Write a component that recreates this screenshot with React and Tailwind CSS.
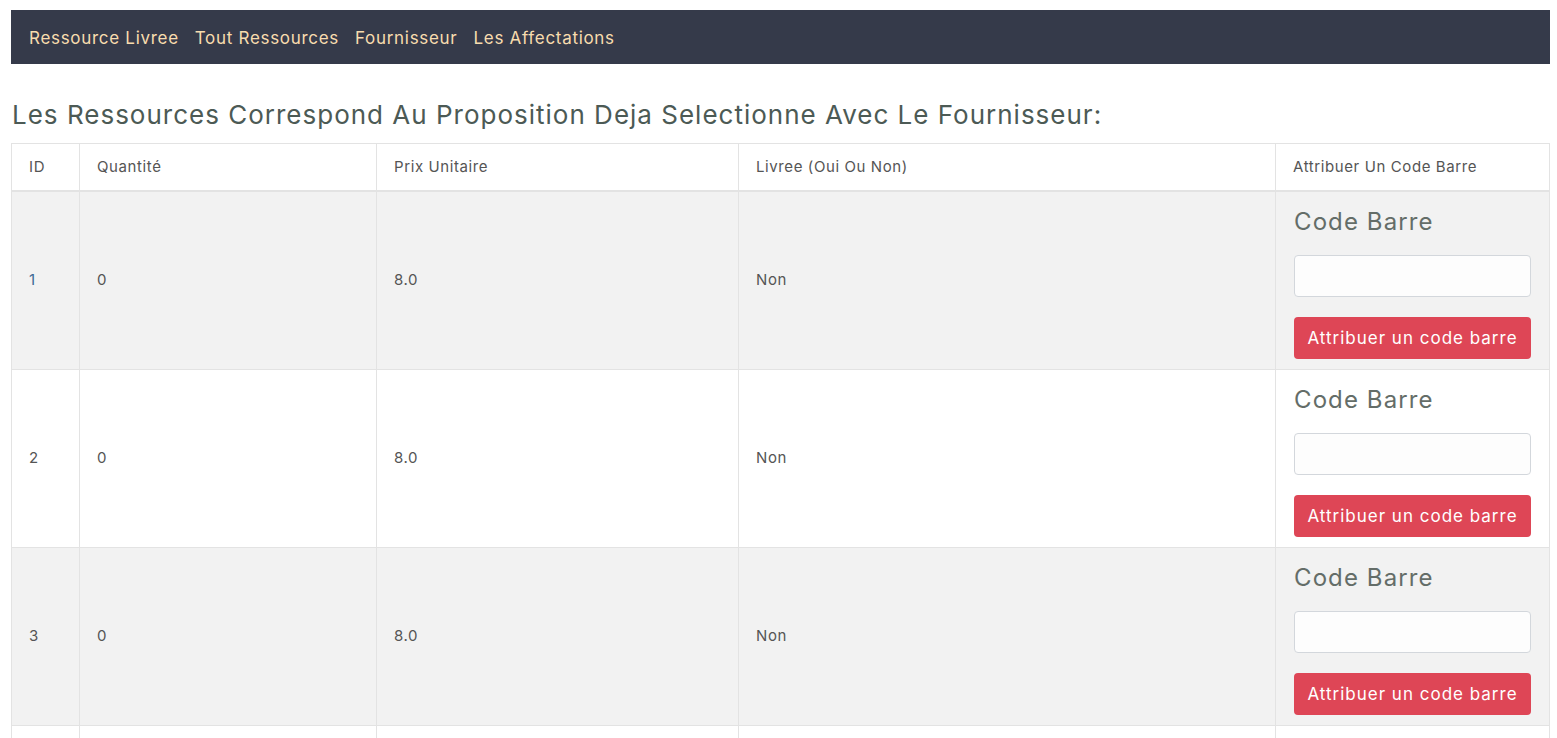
const navLinks = ["Ressource Livree", "Tout Ressources", "Fournisseur", "Les Affectations"];

const rows = [
  { id: 1, qte: 0, prix: "8.0", livree: "Non" },
  { id: 2, qte: 0, prix: "8.0", livree: "Non" },
  { id: 3, qte: 0, prix: "8.0", livree: "Non" },
  { id: 4, qte: 0, prix: "8.0", livree: "Non" },
];

function CodeBarreCell() {
  return (
    <td className="border border-[#e3e3e3] px-[18px] pt-[12px] pb-[10px] align-top">
      <div className="text-[24px] leading-[36px] tracking-[1.1px] text-[#646d68]">Code Barre</div>
      <input
        type="text"
        className="mt-[15px] block w-full h-[42px] rounded-[4px] border border-[#d3d7dc] bg-[#fdfdfd]"
      />
      <button className="mt-[20px] w-full h-[42px] pt-[2px] rounded-[4px] bg-[#de4656] text-white text-[17px] tracking-[1px]">
        Attribuer un code barre
      </button>
    </td>
  );
}

export default function App() {
  return (
    <div className="min-h-screen bg-white pt-[10px] pl-[11px] pr-[7px]" style={{ fontFamily: "Inter, 'Noto Sans', sans-serif" }}>
      {/* Navbar */}
      <nav className="h-[54px] bg-[#353a4a] flex items-center pl-[18px] pt-[3px] gap-[16px]">
        {navLinks.map((l) => (
          <a key={l} href="#" className="text-[17px] tracking-[0.7px] text-[#f8dcae]">
            {l}
          </a>
        ))}
      </nav>

      <h2 className="mt-[33px] mb-[10px] pl-[1px] text-[26px] leading-[36px] tracking-[1px] text-[#4c5a55]">
        Les Ressources Correspond Au Proposition Deja Selectionne Avec Le Fournisseur:
      </h2>

      <table className="w-full border-collapse text-[15px] tracking-[0.6px] text-[#555]">
        <thead>
          <tr className="h-[47px]">
            <th className="w-[68px] border border-[#e3e3e3] border-b-2 px-[17px] text-left font-normal">ID</th>
            <th className="w-[297px] border border-[#e3e3e3] border-b-2 px-[17px] text-left font-normal">Quantité</th>
            <th className="w-[362px] border border-[#e3e3e3] border-b-2 px-[17px] text-left font-normal">Prix Unitaire</th>
            <th className="w-[537px] border border-[#e3e3e3] border-b-2 px-[17px] text-left font-normal">Livree (Oui Ou Non)</th>
            <th className="border border-[#e3e3e3] border-b-2 px-[17px] text-left font-normal">Attribuer Un Code Barre</th>
          </tr>
        </thead>
        <tbody>
          {rows.map((r, i) => (
            <tr key={r.id} className={i % 2 === 0 ? "bg-[#f2f2f2]" : "bg-white"}>
              <td className={i === 0 ? "border border-[#e3e3e3] px-[17px] align-middle text-[#3f6a96]" : "border border-[#e3e3e3] px-[17px] align-middle"}>{r.id}</td>
              <td className="border border-[#e3e3e3] px-[17px] align-middle">{r.qte}</td>
              <td className="border border-[#e3e3e3] px-[17px] align-middle">{r.prix}</td>
              <td className="border border-[#e3e3e3] px-[17px] align-middle">{r.livree}</td>
              <CodeBarreCell />
            </tr>
          ))}
        </tbody>
      </table>
    </div>
  );
}
